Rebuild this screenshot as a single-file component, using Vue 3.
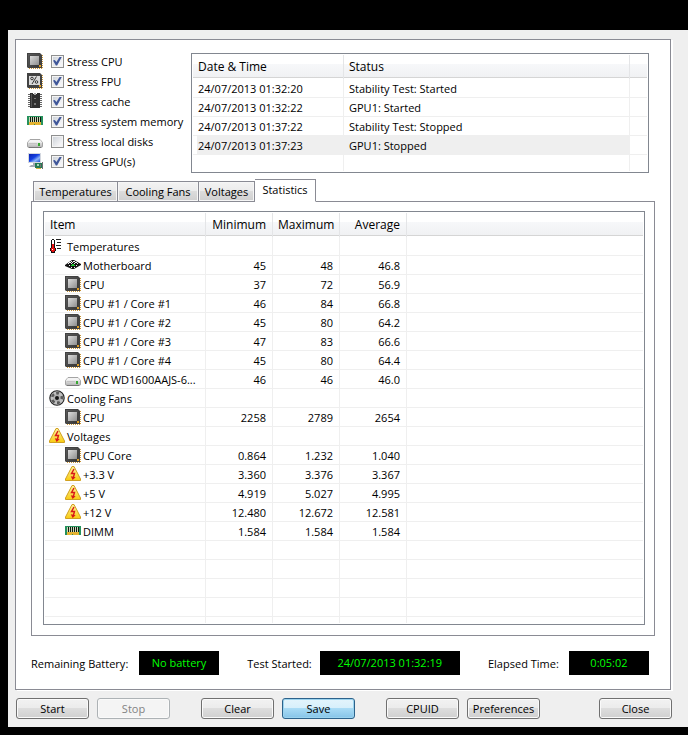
<script setup>
import { ref } from 'vue'

const stressTests = ref([
  { id: 'cpu', icon: 'cpu', label: 'Stress CPU', on: true },
  { id: 'fpu', icon: 'fpu', label: 'Stress FPU', on: true },
  { id: 'cache', icon: 'cache', label: 'Stress cache', on: true },
  { id: 'memory', icon: 'dimm', label: 'Stress system memory', on: true },
  { id: 'disks', icon: 'disk', label: 'Stress local disks', on: false },
  { id: 'gpu', icon: 'gpu', label: 'Stress GPU(s)', on: true },
])

const log = [
  { time: '24/07/2013 01:32:20', status: 'Stability Test: Started' },
  { time: '24/07/2013 01:32:22', status: 'GPU1: Started' },
  { time: '24/07/2013 01:37:22', status: 'Stability Test: Stopped' },
  { time: '24/07/2013 01:37:23', status: 'GPU1: Stopped', selected: true },
]

const tabs = ['Temperatures', 'Cooling Fans', 'Voltages', 'Statistics']
const activeTab = ref('Statistics')

const stats = [
  { icon: 'thermo', name: 'Temperatures', group: true },
  { icon: 'board', name: 'Motherboard', values: ['45', '48', '46.8'] },
  { icon: 'cpu', name: 'CPU', values: ['37', '72', '56.9'] },
  { icon: 'cpu', name: 'CPU #1 / Core #1', values: ['46', '84', '66.8'] },
  { icon: 'cpu', name: 'CPU #1 / Core #2', values: ['45', '80', '64.2'] },
  { icon: 'cpu', name: 'CPU #1 / Core #3', values: ['47', '83', '66.6'] },
  { icon: 'cpu', name: 'CPU #1 / Core #4', values: ['45', '80', '64.4'] },
  { icon: 'disk', name: 'WDC WD1600AAJS-6...', values: ['46', '46', '46.0'] },
  { icon: 'fan', name: 'Cooling Fans', group: true },
  { icon: 'cpu', name: 'CPU', values: ['2258', '2789', '2654'] },
  { icon: 'volt', name: 'Voltages', group: true },
  { icon: 'cpu', name: 'CPU Core', values: ['0.864', '1.232', '1.040'] },
  { icon: 'volt', name: '+3.3 V', values: ['3.360', '3.376', '3.367'] },
  { icon: 'volt', name: '+5 V', values: ['4.919', '5.027', '4.995'] },
  { icon: 'volt', name: '+12 V', values: ['12.480', '12.672', '12.581'] },
  { icon: 'dimm', name: 'DIMM', values: ['1.584', '1.584', '1.584'] },
]
const emptyRows = 4
</script>

<template>
  <svg class="sprite" aria-hidden="true">
    <defs>
      <linearGradient id="g-die" x1="0" y1="0" x2="1" y2="1">
        <stop offset="0" stop-color="#dcdcdc" /><stop offset="1" stop-color="#8e8e8e" />
      </linearGradient>
      <linearGradient id="g-pkg" x1="0" y1="0" x2="1" y2="1">
        <stop offset="0" stop-color="#5c5c5c" /><stop offset="1" stop-color="#353535" />
      </linearGradient>
      <linearGradient id="g-disk" x1="0" y1="0" x2="0" y2="1">
        <stop offset="0" stop-color="#fafafa" /><stop offset="1" stop-color="#b4b4b4" />
      </linearGradient>
      <linearGradient id="g-volt" x1="0" y1="0" x2="0" y2="1">
        <stop offset="0" stop-color="#fff0a0" /><stop offset="1" stop-color="#f8cc10" />
      </linearGradient>
      <linearGradient id="g-screen" x1="0" y1="0" x2="1" y2="1">
        <stop offset="0" stop-color="#0a20b0" /><stop offset="0.45" stop-color="#1440e0" /><stop offset="0.7" stop-color="#8cb4f8" /><stop offset="1" stop-color="#2050d8" />
      </linearGradient>
    </defs>
    <symbol id="i-cpu" viewBox="0 0 16 16">
      <path d="M15.500 2V15M2 15.500H15" stroke="#c89438" stroke-dasharray="1 1" />
      <path d="M0 0H13L15 2V15H1L0 14Z" fill="#424242" />
      <path d="M1 1H13V14H1Z" fill="url(#g-pkg)" />
      <rect x="2" y="2" width="10" height="10" fill="#4a4a4a" />
      <rect x="3" y="3" width="9" height="9" fill="url(#g-die)" />
      <rect x="12" y="12" width="2" height="2" fill="#e09c20" />
    </symbol>
    <symbol id="i-fpu" viewBox="0 0 16 16">
      <path d="M15.500 2V15M2 15.500H15" stroke="#c89438" stroke-dasharray="1 1" />
      <path d="M0 0H13L15 2V15H1L0 14Z" fill="#424242" />
      <rect x="2" y="3" width="11" height="9" fill="#dadada" />
      <g fill="none" stroke="#333">
        <circle cx="5" cy="5.500" r="1.300" /><circle cx="9.500" cy="9" r="1.300" />
        <path d="M9.500 3.500L5 11" />
      </g>
      <rect x="12" y="12" width="2" height="2" fill="#e09c20" />
    </symbol>
    <symbol id="i-cache" viewBox="0 0 16 16">
      <path d="M1 1.500H15M1 3.500H15M1 5.500H15M1 7.500H15M1 9.500H15M1 11.500H15M1 13.500H15" stroke="#666" />
      <path d="M3 0H6V1H10V0H13V15H3Z" fill="#303030" />
      <path d="M4 1H5V14H4Z" fill="#555" />
      <path d="M7 0H9V2H7Z" fill="#aaa" />
      <path d="M7 5H9V6H7ZM7 10H9V12H7Z" fill="#777" />
    </symbol>
    <symbol id="i-dimm" viewBox="0 0 16 16">
      <rect y="3" width="16" height="9" fill="#25915c" />
      <rect x="2" y="4" width="12" height="5" fill="#c8d8b8" />
      <path d="M3.500 4V9M5.500 4V9M7.500 4V9M9.500 4V9M11.500 4V9" stroke="#101810" />
      <path d="M13 4H14V9H13Z" fill="#101810" />
      <path d="M2 9H14V12H8V11H7V12H2Z" fill="#e4b332" />
    </symbol>
    <symbol id="i-disk" viewBox="0 0 16 16">
      <path d="M3 6.500H13L15.500 9.500V13Q15.500 14.500 14 14.500H2Q.5 14.500 .5 13V9.500Z" fill="url(#g-disk)" stroke="#a4a4a4" />
      <path d="M3 7H13L15 9.500H1Z" fill="#f4f4f4" />
      <path d="M2 10.500H10" stroke="#c4c4c4" />
      <rect x="11" y="10" width="2" height="3" fill="#38a832" />
      <path d="M2 14.500H14" stroke="#777" />
    </symbol>
    <symbol id="i-gpu" viewBox="0 0 16 16">
      <rect x="1" width="13" height="10" fill="#d4d8e0" />
      <rect x="2" y="1" width="11" height="8" fill="url(#g-screen)" />
      <path d="M6 10H9V12H12V14H2L4 12H6Z" fill="#a4aab4" />
      <rect x="8" y="10" width="7" height="5" fill="#247a52" />
      <rect x="10" y="11" width="2" height="2" fill="#a8d4b8" />
      <path d="M13.500 11V14M15.500 9V16" stroke="#707070" />
      <path d="M9 15.500H14" stroke="#d8b040" />
    </symbol>
    <symbol id="i-thermo" viewBox="0 0 16 16">
      <path d="M3 1H5V2H6V10H7V13H6V15H2V13H1V10H2V2H3Z" fill="#111" />
      <path d="M3 2H5V10H3Z" fill="#fff" />
      <path d="M3 6H5V10H6V13H5V14H3V13H2V10H3Z" fill="#e81010" />
      <path d="M3 11H4V12H3Z" fill="#fff" />
      <path d="M7 1.500H12M8 4.500H12M7 7.500H12M8 10.500H12" stroke="#222" />
    </symbol>
    <symbol id="i-board" viewBox="0 0 16 16">
      <path d="M0 8L7 3H9L16 7V8L9 12H7L0 9Z" fill="#151515" />
      <path d="M6 4H7V5H6ZM8 4H10V5H8ZM4 5H6V6H4ZM7 5H8V6H7ZM10 5H12V6H10ZM3 6H4V7H3ZM6 6H7V7H6ZM9 6H10V7H9ZM12 6H13V7H12ZM4 8H5V9H4ZM11 8H12V9H11ZM6 10H7V11H6ZM9 10H10V11H9Z" fill="#f4f4f4" />
      <path d="M7 7H9V8H10V9H6V8H7Z" fill="#20c830" />
    </symbol>
    <symbol id="i-fan" viewBox="0 0 16 16">
      <circle cx="8" cy="8" r="7.200" fill="#c0c0c0" stroke="#222" stroke-width="1.100" />
      <g fill="#5a5a5a">
        <path d="M8 8L7 2Q9 1.300 10.500 2.200Z" />
        <path d="M8 8L13.600 5.500Q14.500 7.500 14 9.500Z" />
        <path d="M8 8L11.500 13Q10 14.200 8 14.200Z" />
        <path d="M8 8L5 13.500Q3 12.500 2 10.500Z" />
        <path d="M8 8L1.900 6.500Q2.500 4.500 4.300 3.200Z" />
      </g>
      <circle cx="8" cy="8" r="3.600" fill="#b0b0b0" />
      <circle cx="8" cy="8" r="2" fill="#151515" />
    </symbol>
    <symbol id="i-volt" viewBox="0 0 16 16">
      <path d="M7 .5H9L15.500 13V14.500H.5V13Z" fill="url(#g-volt)" stroke="#d0a020" stroke-linejoin="round" />
      <path d="M9 3L6.500 7.500H9.500L8.300 11.500" fill="none" stroke="#d81818" stroke-width="1.400" />
      <path d="M5.800 10.200L10.600 11.200L7.600 14Z" fill="#d81818" />
    </symbol>
  </svg>

  <main class="window">
    <section class="body">
      <div class="top">
        <ul class="checks">
          <li v-for="t in stressTests" :key="t.id">
            <svg class="icon"><use :href="'#i-' + t.icon" /></svg>
            <input :id="'stress-' + t.id" v-model="t.on" type="checkbox" />
            <label :for="'stress-' + t.id">{{ t.label }}</label>
          </li>
        </ul>
        <div class="list log">
          <table>
            <colgroup><col class="c-time" /><col /><col class="c-end" /></colgroup>
            <thead>
              <tr><th>Date &amp; Time</th><th>Status</th><th></th></tr>
            </thead>
            <tbody>
              <tr v-for="row in log" :key="row.time" :class="{ selected: row.selected }">
                <td>{{ row.time }}</td>
                <td>{{ row.status }}</td>
                <td></td>
              </tr>
              <tr class="rest"><td></td><td></td><td></td></tr>
            </tbody>
          </table>
        </div>
      </div>

      <div class="tabs" role="tablist">
        <button
          v-for="tab in tabs"
          :key="tab"
          type="button"
          role="tab"
          :aria-selected="tab === activeTab"
          :class="['tab', { active: tab === activeTab }]"
          @click="activeTab = tab"
        >{{ tab }}</button>
      </div>
      <div class="panel" role="tabpanel">
        <div class="list stats">
          <table>
            <colgroup><col class="c-item" /><col class="c-val" /><col class="c-val" /><col class="c-val" /><col /></colgroup>
            <thead>
              <tr><th>Item</th><th class="right">Minimum</th><th class="right">Maximum</th><th class="right">Average</th><th></th></tr>
            </thead>
            <tbody>
              <tr v-for="(row, i) in stats" :key="i">
                <td class="name">
                  <div :class="['item', { child: !row.group }]">
                    <svg class="icon"><use :href="'#i-' + row.icon" /></svg>
                    <span>{{ row.name }}</span>
                  </div>
                </td>
                <td v-for="n in 3" :key="n" class="right">{{ row.values ? row.values[n - 1] : '' }}</td>
                <td></td>
              </tr>
              <tr v-for="n in emptyRows" :key="'empty' + n"><td v-for="c in 5" :key="c"></td></tr>
              <tr class="rest"><td v-for="c in 5" :key="c"></td></tr>
            </tbody>
          </table>
        </div>
      </div>

      <div class="status">
        <div class="field"><label for="battery">Remaining Battery:</label><output id="battery" class="short">No battery</output></div>
        <div class="field"><label for="started">Test Started:</label><output id="started" class="long">24/07/2013 01:32:19</output></div>
        <div class="field"><label for="elapsed">Elapsed Time:</label><output id="elapsed" class="short">0:05:02</output></div>
      </div>
    </section>

    <footer class="actions">
      <div class="pair">
        <button type="button" class="btn">Start</button>
        <button type="button" class="btn" disabled>Stop</button>
      </div>
      <div class="pair">
        <button type="button" class="btn">Clear</button>
        <button type="button" class="btn primary">Save</button>
      </div>
      <div class="pair">
        <button type="button" class="btn">CPUID</button>
        <button type="button" class="btn">Preferences</button>
      </div>
      <button type="button" class="btn close">Close</button>
    </footer>
  </main>
</template>

<style>
html,
body {
  background: #000;
}
#app {
  padding: 30px 0 0 8px;
}
</style>

<style scoped>
.sprite {
  position: absolute;
  width: 0;
  height: 0;
}
.window {
  box-sizing: border-box;
  padding: 9px 16px 8px 7px;
  background: #efefef;
  color: #000;
  font: 11px/16px "Open Sans", "Noto Sans", sans-serif;
}
.window * {
  box-sizing: border-box;
}
.icon {
  flex: none;
  display: block;
  width: 16px;
  height: 16px;
}
.body {
  padding: 11px 15px 14px;
  margin-right: 1px;
  border: 1px solid #8a8b94;
  background: #fff;
  box-shadow: 2px 1px 0 #fff;
}
.top {
  display: flex;
  padding-right: 6px;
}
.checks {
  flex: none;
  width: 160px;
  margin: 0;
  padding: 0;
  list-style: none;
}
.checks li {
  display: flex;
  align-items: center;
  height: 20px;
  margin-left: -4px;
  white-space: nowrap;
}
.checks label {
  padding-top: 2px;
}
.checks input {
  appearance: none;
  flex: none;
  display: grid;
  place-items: center;
  width: 13px;
  height: 13px;
  margin: 0 3px 0 8px;
  border: 1px solid #8e8f8f;
  background: linear-gradient(135deg, #c9cfd6, #f4f4f6 75%);
  box-shadow: inset 0 0 0 1px #f4f4f4;
}
.checks input:checked::before {
  content: "";
  width: 9px;
  height: 9px;
  background: #40579a;
  clip-path: polygon(0 45%, 20% 38%, 38% 62%, 76% 0, 100% 0, 46% 100%, 32% 100%);
}
.list {
  padding: 1px;
  border: 1px solid #828790;
  background: #fff;
}
.log {
  flex: 1;
  height: 120px;
  margin-top: 2px;
}
table {
  width: 100%;
  height: 100%;
  table-layout: fixed;
  border-collapse: separate;
  border-spacing: 0;
}
.c-time {
  width: 151px;
}
.c-end {
  width: 17px;
}
.c-item {
  width: 161px;
}
.c-val {
  width: 67px;
}
th {
  height: 24px;
  padding: 0 6px 0 5px;
  border-right: 1px solid #e4e5e7;
  background: linear-gradient(#fff 9px, #f7f8fa 9px, #f0f1f3 22px, #d5d5d5 22px, #d5d5d5 23px, #fff 23px);
  font-size: 12px;
  font-weight: 400;
  text-align: left;
}
td {
  height: 19px;
  padding: 2px 6px 0 5px;
  border-right: 1px solid #efefef;
  border-bottom: 1px solid #efefef;
  white-space: nowrap;
}
.name {
  padding: 0 0 0 5px;
}
th:last-child,
td:last-child {
  border-right: 0;
}
.rest td {
  height: auto;
  padding: 0;
  border-bottom: 0;
}
.right {
  text-align: right;
}
.selected td:not(:last-child) {
  background: #efefef;
}
.selected td:first-child {
  box-shadow: inset 4px 0 0 #fff;
}
.item {
  display: flex;
  align-items: center;
  gap: 2px;
  margin-left: -1px;
}
.item span {
  padding-top: 2px;
}
.child {
  padding-left: 16px;
}
.tabs {
  display: flex;
  align-items: flex-end;
  height: 23px;
  margin: 6px 0 -1px;
  padding-left: 2px;
}
.tab {
  height: 21px;
  margin: 0;
  padding: 0;
  width: 85px;
  border: 1px solid #8a8b94;
  border-left-width: 0;
  background: linear-gradient(#f3f3f3, #ebebeb 50%, #dcdcdc 50%, #cfcfcf);
  box-shadow: inset 0 0 0 1px #f6f6f6;
  color: #000;
  font: inherit;
  white-space: nowrap;
}
.tab:first-child {
  border-left-width: 1px;
}
.tab:nth-child(2) {
  width: 81px;
}
.tab:nth-child(3) {
  width: 56px;
}
.tab:nth-child(4) {
  width: 61px;
}
.tab.active {
  height: 23px;
  padding-bottom: 1px;
  border-bottom-color: #fff;
  background: #fff;
  box-shadow: none;
}
.panel {
  padding: 9px 9px 10px 11px;
  border: 1px solid #8a8b94;
}
.stats {
  height: 414px;
}
.status {
  display: flex;
  justify-content: space-between;
  margin-top: 15px;
  padding-right: 6px;
}
.field {
  display: flex;
  align-items: center;
  gap: 8px;
  white-space: nowrap;
}
.field label {
  padding-top: 2px;
}
.field:first-child label {
  min-width: 100px;
}
.field:last-child label {
  min-width: 73px;
}
output {
  height: 24px;
  background: #000;
  color: #0f0;
  line-height: 24px;
  text-align: center;
}
.short {
  width: 80px;
}
.long {
  width: 140px;
}
.actions {
  display: flex;
  gap: 31px;
  margin: 8px 0 0 1px;
}
.pair {
  display: flex;
  gap: 8px;
}
.btn {
  width: 73px;
  height: 21px;
  padding: 0;
  border: 1px solid #707070;
  border-radius: 3px;
  background: linear-gradient(#f2f2f2, #ebebeb 50%, #dddddd 50%, #cfcfcf);
  box-shadow: inset 0 0 0 1px #fafafa;
  color: #000;
  font: inherit;
  line-height: 19px;
}
.btn:disabled {
  border-color: #adb2b5;
  background: #f4f4f4;
  color: #838383;
}
.primary {
  border-color: #2c628b;
  background: linear-gradient(#e3f4fc, #d6effb 50%, #a9dbf5 50%, #86c4e8);
  box-shadow: inset 0 0 0 1px #9bd3ee;
}
.close {
  margin-left: auto;
}
</style>
